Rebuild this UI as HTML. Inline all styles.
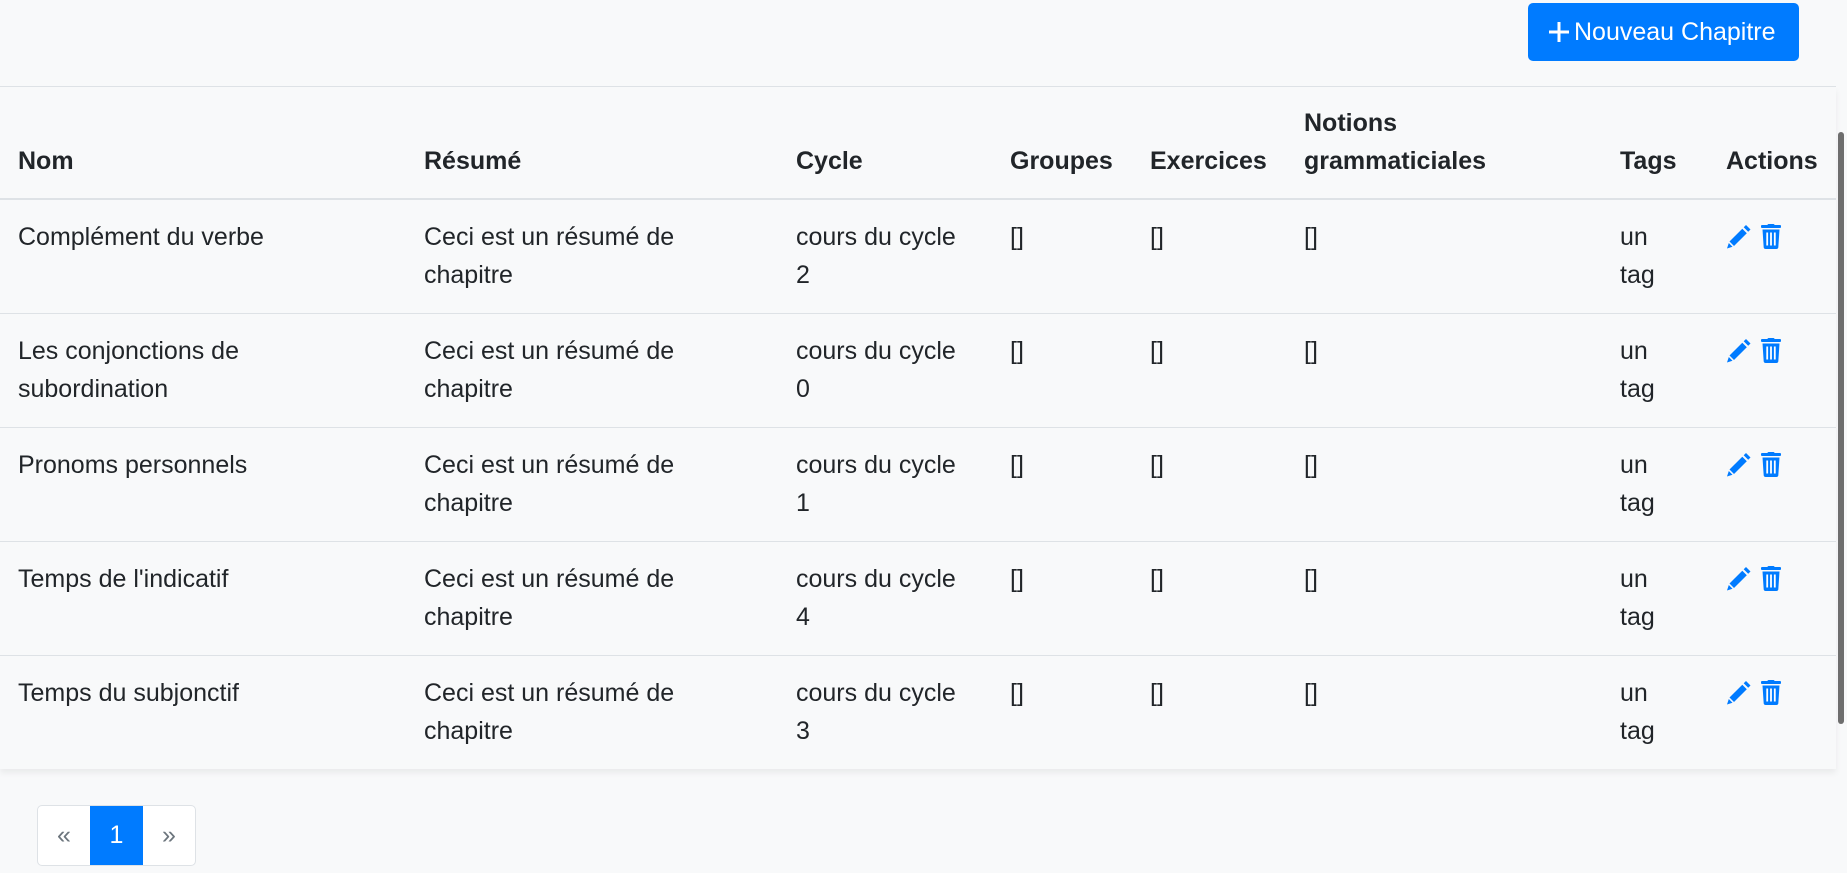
<!DOCTYPE html>
<html><head><meta charset="utf-8"><style>
html,body{margin:0;padding:0;width:1847px;height:873px;overflow:hidden;background:#f8f9fa;font-family:"Liberation Sans",sans-serif;color:#212529;}
.btn{position:absolute;left:1528px;top:3px;width:271px;height:58px;background:#007bff;border-radius:5px;color:#fff;font-size:25px;line-height:58px;box-sizing:border-box;padding-left:20px;white-space:nowrap}
.btn svg{vertical-align:-3px;margin-right:4px}
.hr{position:absolute;left:0;top:86px;width:1836px;height:1px;background:#dee2e6}
table{position:absolute;left:0;top:87px;border-collapse:collapse;table-layout:fixed;width:1836px;font-size:25px;line-height:37.5px;box-shadow:0 4px 6px rgba(0,0,0,0.06);background:#f8f9fa}
th,td{text-align:left;padding:19px 18px;vertical-align:top;white-space:nowrap;overflow:visible}
th{vertical-align:bottom;font-weight:bold;border-bottom:2px solid #dee2e6;padding-top:18px;padding-bottom:18px}
td{border-bottom:1px solid #dee2e6;height:74px}
tr:last-child td{border-bottom:none}
.sb{position:absolute;left:1838px;top:132px;width:6px;height:592px;background:#6e6e6e;border-radius:3px}
.pg{position:absolute;left:37px;top:805px;height:59px;display:flex;border:1px solid #dee2e6;border-radius:5px;background:#fff;overflow:hidden;font-size:25px}
.pg div{width:52px;text-align:center;line-height:58px;color:#6c757d}
.pg .a{background:#007bff;color:#fff;width:53px}
</style></head><body>
<div class="btn"><svg width="22" height="22" viewBox="0 0 22 22"><path d="M11 1v20M1 11h20" stroke="#fff" stroke-width="3"/></svg>Nouveau Chapitre</div>
<div class="hr"></div>
<table>
<colgroup><col style="width:406px"><col style="width:372px"><col style="width:214px"><col style="width:140px"><col style="width:154px"><col style="width:316px"><col style="width:106px"><col style="width:128px"></colgroup>
<tr><th>Nom</th><th>Résumé</th><th>Cycle</th><th>Groupes</th><th>Exercices</th><th>Notions<br>grammaticiales</th><th>Tags</th><th>Actions</th></tr>
<tr><td>Complément du verbe</td><td>Ceci est un résumé de<br>chapitre</td><td>cours du cycle<br>2</td><td>[]</td><td>[]</td><td>[]</td><td>un<br>tag</td><td class="ic"></td></tr>
<tr><td>Les conjonctions de<br>subordination</td><td>Ceci est un résumé de<br>chapitre</td><td>cours du cycle<br>0</td><td>[]</td><td>[]</td><td>[]</td><td>un<br>tag</td><td class="ic"></td></tr>
<tr><td>Pronoms personnels</td><td>Ceci est un résumé de<br>chapitre</td><td>cours du cycle<br>1</td><td>[]</td><td>[]</td><td>[]</td><td>un<br>tag</td><td class="ic"></td></tr>
<tr><td>Temps de l'indicatif</td><td>Ceci est un résumé de<br>chapitre</td><td>cours du cycle<br>4</td><td>[]</td><td>[]</td><td>[]</td><td>un<br>tag</td><td class="ic"></td></tr>
<tr><td>Temps du subjonctif</td><td>Ceci est un résumé de<br>chapitre</td><td>cours du cycle<br>3</td><td>[]</td><td>[]</td><td>[]</td><td>un<br>tag</td><td class="ic"></td></tr>
</table>
<script>
var ic='<svg width="58" height="28" viewBox="0 0 58 28" style="margin-top:4px;display:block"><g fill="#007bff"><path d="M20 2l4.5 4.5-2.3 2.3-4.5-4.5z"/><path d="M16.3 5.7l4.5 4.5L8 23 3.5 18.5z"/><path d="M2.8 20l3.7 3.7L1 25.5z"/><rect x="35" y="2" width="20" height="3" rx="1"/><rect x="41.5" y="1" width="7" height="2.5" rx="1"/><path d="M36.5 6.5h17l-1.2 18a2 2 0 0 1-2 1.5h-10.6a2 2 0 0 1-2-1.5z"/></g><g fill="#fff"><rect x="40.3" y="9.5" width="1.8" height="13"/><rect x="44.1" y="9.5" width="1.8" height="13"/><rect x="47.9" y="9.5" width="1.8" height="13"/></g></svg>';
document.querySelectorAll('.ic').forEach(function(e){e.innerHTML=ic;});
</script>
<div class="sb"></div>
<div class="pg"><div>«</div><div class="a">1</div><div>»</div></div>
</body></html>
